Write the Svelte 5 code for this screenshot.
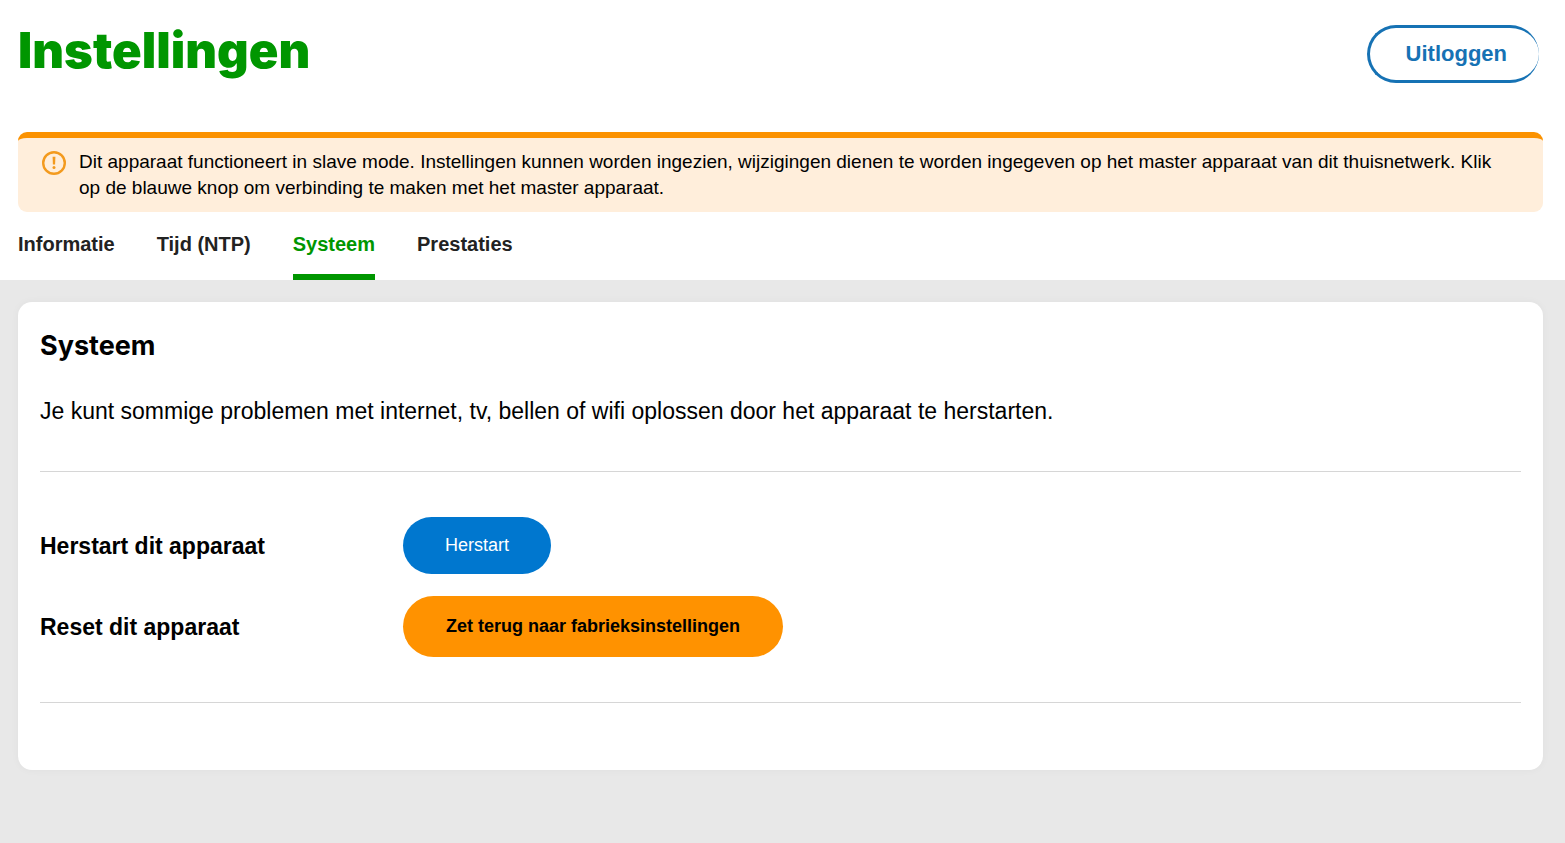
<script>
  const tabs = ['Informatie', 'Tijd (NTP)', 'Systeem', 'Prestaties'];
  let active = $state('Systeem');
</script>

<div class="page">
  <header>
    <h1>Instellingen</h1>
    <button class="logout" type="button">Uitloggen</button>
  </header>

  <div class="notice" role="status">
    <svg viewBox="0 0 24 24" width="24" height="24" aria-hidden="true">
      <circle cx="12" cy="12" r="10.8" fill="none" stroke="#f39a1e" stroke-width="2.4" />
      <path d="M10.6 5.8h2.8l-.3 7.6h-2.2z" fill="#f39a1e" />
      <circle cx="12" cy="16.6" r="1.5" fill="#f39a1e" />
    </svg>
    <p>
      Dit apparaat functioneert in slave mode. Instellingen kunnen worden ingezien, wijzigingen
      dienen te worden ingegeven op het master apparaat van dit thuisnetwerk. Klik op de blauwe
      knop om verbinding te maken met het master apparaat.
    </p>
  </div>

  <nav>
    {#each tabs as tab}
      <button
        type="button"
        class="tab"
        class:active={tab === active}
        aria-current={tab === active ? 'page' : undefined}
        onclick={() => (active = tab)}>{tab}</button>
    {/each}
  </nav>

  <main>
    <section class="card">
      <h2>Systeem</h2>
      <p class="intro">
        Je kunt sommige problemen met internet, tv, bellen of wifi oplossen door het apparaat te
        herstarten.
      </p>
      <div class="actions">
        <div class="row">
          <h3 id="restart">Herstart dit apparaat</h3>
          <button class="pill blue" type="button" aria-describedby="restart">Herstart</button>
        </div>
        <div class="row">
          <h3 id="reset">Reset dit apparaat</h3>
          <button class="pill orange" type="button" aria-describedby="reset">Zet terug naar fabrieksinstellingen</button>
        </div>
      </div>
    </section>
  </main>
</div>

<style>
  :global(body) {
    margin: 0;
    background: #fff;
  }
  .page {
    min-height: 100vh;
    display: flex;
    flex-direction: column;
    font-family: 'Liberation Sans', Arial, sans-serif;
    color: #000;
  }
  h1, h2, h3, p {
    margin: 0;
  }
  button {
    font-family: inherit;
    cursor: pointer;
  }
  header {
    display: flex;
    justify-content: space-between;
    align-items: flex-start;
    padding: 19px 26px 49px 18px;
  }
  h1 {
    font: 900 49px/64px Inter, sans-serif;
    color: #009600;
  }
  .logout {
    margin-top: 6px;
    padding: 0 32px 0 36px;
    height: 58px;
    border: 3px solid #1672b4;
    border-right-width: 0;
    border-radius: 29px;
    background: #fff;
    color: #1672b4;
    font-size: 22px;
    font-weight: 700;
  }
  .notice {
    display: flex;
    gap: 13px;
    align-items: flex-start;
    margin: 0 22px 0 18px;
    padding: 11px 48px 11px 24px;
    border-top: 6px solid #fb9200;
    border-radius: 9px;
    background: #ffeedb;
  }
  .notice svg {
    flex: none;
    margin-top: 2px;
  }
  .notice p {
    font-size: 19px;
    line-height: 26px;
  }
  nav {
    display: flex;
    gap: 42px;
    padding: 0 18px;
  }
  .tab {
    height: 68px;
    padding: 2px 0 0;
    border: 0;
    border-bottom: 6px solid transparent;
    background: none;
    color: #222;
    font-size: 20px;
    font-weight: 700;
  }
  .tab.active {
    color: #009600;
    border-color: #009600;
  }
  main {
    flex: 1;
    padding: 22px 22px 73px 18px;
    background: #e8e8e8;
  }
  .card {
    padding: 26px 22px 67px;
    border-radius: 14px;
    background: #fff;
    box-shadow: 0 0 8px rgba(0, 0, 0, 0.04);
  }
  h2 {
    font: 700 27px/36px Inter, sans-serif;
  }
  .intro {
    margin-top: 32px;
    font-size: 23px;
    line-height: 30px;
  }
  .actions {
    display: grid;
    gap: 22px;
    margin-top: 45px;
    padding: 45px 0;
    border: solid #d6d6d6;
    border-width: 1px 0;
  }
  .row {
    display: grid;
    grid-template-columns: 363px 1fr;
    align-items: center;
    justify-items: start;
  }
  h3 {
    font-size: 23px;
    line-height: 30px;
  }
  .pill {
    border: 0;
    border-radius: 31px;
    font-size: 18px;
  }
  .blue {
    height: 57px;
    padding: 0 42px;
    background: #0077cf;
    color: #fff;
  }
  .orange {
    height: 61px;
    padding: 0 43px;
    background: #ff9200;
    color: #000;
    font-weight: 700;
  }
</style>
